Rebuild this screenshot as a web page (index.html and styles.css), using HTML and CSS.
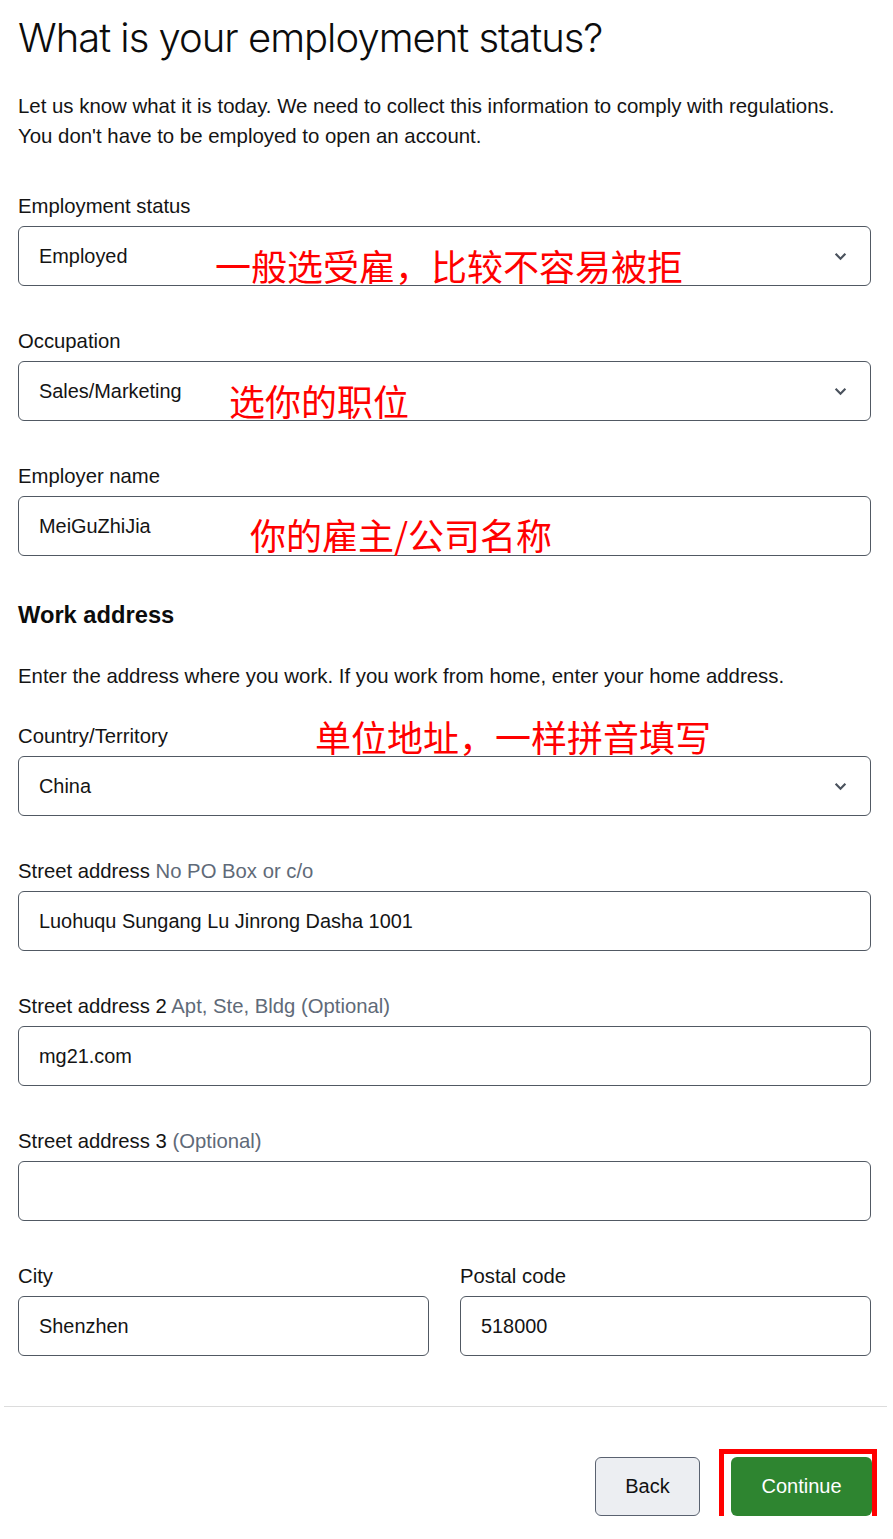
FILE: index.html
```html
<!DOCTYPE html>
<html lang="en">
<head>
<meta charset="utf-8">
<title>Employment status</title>
<link rel="stylesheet" href="styles.css">
</head>
<body>
<main class="page">
  <h1 class="title">What is your employment status?</h1>
  <p class="intro">Let us know what it is today. We need to collect this information to comply with regulations.<br>You don't have to be employed to open an account.</p>

  <div class="field">
    <label class="label">Employment status</label>
    <div class="box select"><span>Employed</span><svg class="chev" viewBox="0 0 12 8" width="12" height="8"><path d="M1.5 1.5 6 6l4.5-4.5" fill="none" stroke="#4a525d" stroke-width="2"/></svg></div>
    <span class="note note-1">一般选受雇，比较不容易被拒</span>
  </div>

  <div class="field">
    <label class="label">Occupation</label>
    <div class="box select"><span>Sales/Marketing</span><svg class="chev" viewBox="0 0 12 8" width="12" height="8"><path d="M1.5 1.5 6 6l4.5-4.5" fill="none" stroke="#4a525d" stroke-width="2"/></svg></div>
    <span class="note note-2">选你的职位</span>
  </div>

  <div class="field">
    <label class="label">Employer name</label>
    <div class="box"><span>MeiGuZhiJia</span></div>
    <span class="note note-3">你的雇主/公司名称</span>
  </div>

  <h2 class="section">Work address</h2>
  <p class="intro">Enter the address where you work. If you work from home, enter your home address.</p>

  <div class="field">
    <label class="label">Country/Territory</label>
    <div class="box select"><span>China</span><svg class="chev" viewBox="0 0 12 8" width="12" height="8"><path d="M1.5 1.5 6 6l4.5-4.5" fill="none" stroke="#4a525d" stroke-width="2"/></svg></div>
    <span class="note note-4">单位地址，一样拼音填写</span>
  </div>

  <div class="field">
    <label class="label">Street address <span class="hint">No PO Box or c/o</span></label>
    <div class="box"><span>Luohuqu Sungang Lu Jinrong Dasha 1001</span></div>
  </div>

  <div class="field">
    <label class="label">Street address 2 <span class="hint">Apt, Ste, Bldg (Optional)</span></label>
    <div class="box"><span>mg21.com</span></div>
  </div>

  <div class="field">
    <label class="label">Street address 3 <span class="hint">(Optional)</span></label>
    <div class="box"><span></span></div>
  </div>

  <div class="row">
    <div class="field">
      <label class="label">City</label>
      <div class="box"><span>Shenzhen</span></div>
    </div>
    <div class="field">
      <label class="label">Postal code</label>
      <div class="box"><span>518000</span></div>
    </div>
  </div>
</main>
<hr class="divider">
<div class="actions">
  <button class="btn btn-back">Back</button>
  <div class="continue-wrap">
    <button class="btn btn-continue">Continue</button>
    <span class="frame"></span>
  </div>
</div>
</body>
</html>
```

FILE: styles.css
```css
html, body {
  margin: 0;
  padding: 0;
  background: #ffffff;
}
body {
  font-family: "Liberation Sans", Arial, sans-serif;
  color: #111;
  width: 893px;
}
.page {
  padding: 14px 22px 0 18px;
}
.title {
  margin: 0;
  font-family: Inter, "Liberation Sans", sans-serif;
  font-weight: 300;
  font-size: 40px;
  line-height: 48px;
  letter-spacing: -1px;
  color: #0c0c0c;
}
.intro {
  margin: 29px 0 43px;
  font-size: 20.4px;
  line-height: 30px;
  color: #141414;
}
.field {
  position: relative;
  margin-bottom: 43px;
}
.label {
  display: block;
  font-size: 20.3px;
  line-height: 24px;
  margin-bottom: 8px;
  color: #141414;
}
.hint {
  color: #5f6a78;
}
.box {
  box-sizing: border-box;
  height: 60px;
  border: 1px solid #515963;
  border-radius: 6px;
  display: flex;
  align-items: center;
  justify-content: space-between;
  padding: 0 23px 0 20px;
  font-size: 19.9px;
  color: #141414;
}
.chev {
  display: block;
  width: 13px;
  height: 9px;
}
.section {
  margin: 45px 0 0;
  font-size: 23.7px;
  line-height: 28px;
  font-weight: 700;
  color: #0c0c0c;
}
.section + .intro {
  margin-top: 32px;
  margin-bottom: 33px;
}
.row {
  display: grid;
  grid-template-columns: 1fr 1fr;
  gap: 31px;
}
.row .field {
  margin-bottom: 0;
}
.note {
  position: absolute;
  font-family: "Noto Sans CJK SC", sans-serif;
  color: #ff0000;
  font-size: 36px;
  line-height: 42px;
  white-space: nowrap;
}
.note-1 { left: 197px; top: 50px; }
.note-2 { left: 211px; top: 50px; }
.note-3 { left: 232px; top: 49px; }
.note-4 { left: 297px; top: -9px; }
.divider {
  margin: 50px 6px 0 4px;
  border: 0;
  border-top: 1px solid #dcdcdc;
  height: 0;
}
.actions {
  display: flex;
  justify-content: flex-end;
  gap: 31px;
  padding: 50px 21px 0 0;
}
.btn {
  font-family: "Liberation Sans", Arial, sans-serif;
  font-size: 20px;
  height: 59px;
  border-radius: 6px;
  cursor: pointer;
}
.btn-back {
  width: 105px;
  background: #eceef2;
  border: 1px solid #5a6270;
  color: #111;
}
.btn-continue {
  display: block;
  width: 141px;
  background: #2e8530;
  border: 0;
  color: #fff;
}
.continue-wrap {
  position: relative;
}
.frame {
  position: absolute;
  left: -12px;
  top: -8px;
  width: 158px;
  height: 75px;
  box-sizing: border-box;
  border: 5px solid #ff0000;
  pointer-events: none;
}
```
